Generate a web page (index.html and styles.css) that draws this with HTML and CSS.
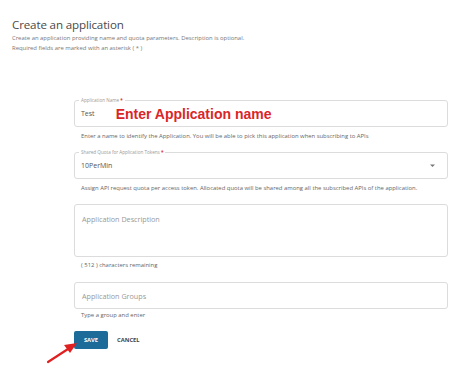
FILE: index.html
```html
<!DOCTYPE html>
<html>
<head>
<meta charset="utf-8">
<link rel="stylesheet" href="styles.css">
</head>
<body>
<div class="page">
  <header class="head">
    <h1 class="title">Create an application</h1>
    <p class="sub">Create an application providing name and quota parameters. Description is optional.</p>
    <p class="sub">Required fields are marked with an asterisk ( * )</p>
  </header>
  <form class="form">
    <div class="field f1">
      <span class="legend">Application Name <b class="req">*</b></span>
      <span class="value">Test</span>
      <span class="note">Enter Application name</span>
    </div>
    <p class="help h1">Enter a name to identify the Application. You will be able to pick this application when subscribing to APIs</p>

    <div class="field f2">
      <span class="legend">Shared Quota for Application Tokens <b class="req">*</b></span>
      <span class="value">10PerMin</span>
      <svg class="caret" width="6" height="4" viewBox="0 0 6 4"><path d="M0 0.5h5l-2.5 2.6z" fill="#777"/></svg>
    </div>
    <p class="help h2">Assign API request quota per access token. Allocated quota will be shared among all the subscribed APIs of the application.</p>

    <div class="field area">
      <span class="ph">Application Description</span>
    </div>
    <p class="help h3">( 512 ) characters remaining</p>

    <div class="field f4">
      <span class="ph">Application Groups</span>
    </div>
    <p class="help h4">Type a group and enter</p>

    <div class="actions">
      <button type="button" class="btn save">SAVE</button>
      <button type="button" class="btn cancel">CANCEL</button>
    </div>
  </form>
  <svg class="arrow" width="40" height="30" viewBox="0 0 40 30">
    <line x1="4" y1="26" x2="24" y2="13" stroke="#e02020" stroke-width="2.2" stroke-linecap="round"/>
    <polygon points="33,7 20,9 26,17" fill="#e02020"/>
  </svg>
</div>
</body>
</html>
```

FILE: styles.css
```css
html, body {
  margin: 0;
  padding: 0;
  background: #fff;
}
body {
  font-family: "Open Sans", "Noto Sans", sans-serif;
  color: #555;
}
.page {
  position: relative;
  width: 474px;
  height: 375px;
  overflow: hidden;
}
.head {
  padding: 16px 0 0 12px;
}
.title {
  margin: 0;
  font-size: 11.6px;
  line-height: 17px;
  font-weight: 400;
  color: #4a4a4a;
  letter-spacing: -0.15px;
}
.sub {
  margin: 0;
  font-size: 5.9px;
  line-height: 10px;
  color: #777;
}
.form {
  margin: 0 0 0 74px;
  width: 374px;
  padding-top: 47px;
}
.field {
  position: relative;
  box-sizing: border-box;
  border: 1px solid #dcdcdc;
  border-radius: 3px;
  height: 27px;
  display: flex;
  align-items: center;
  padding: 0 6px;
}
.legend {
  position: absolute;
  left: 4px;
  top: -4px;
  background: #fff;
  padding: 0 2px;
  font-size: 4.6px;
  line-height: 6px;
  color: #999;
}
.req {
  color: #d33;
  font-weight: 700;
}
.value {
  font-size: 7px;
  color: #555;
}
.note {
  margin-left: 21px;
  font-family: "Liberation Sans", Arial, sans-serif;
  font-weight: 700;
  font-size: 14px;
  color: #d9262a;
}
.caret {
  margin-left: auto;
  margin-right: 5px;
}
.help {
  margin: 0;
  padding-left: 7px;
  font-size: 5.9px;
  line-height: 8px;
  color: #666;
}
.h1 { margin-top: 5px; margin-bottom: 12px; }
.h2 { margin-top: 5px; margin-bottom: 12px; }
.h3 { margin-top: 4px; margin-bottom: 13px; }
.h4 { margin-top: 2px; margin-bottom: 12px; }
.area {
  height: 53px;
  align-items: flex-start;
  padding-top: 9px;
}
.ph {
  font-size: 7.2px;
  color: #999;
  padding-left: 1px;
}
.actions {
  display: flex;
  align-items: center;
  gap: 9px;
}
.btn {
  font-family: "Open Sans", "Noto Sans", sans-serif;
  font-weight: 700;
  font-size: 5.8px;
  border: none;
  background: none;
  padding: 0;
  cursor: pointer;
}
.save {
  width: 34px;
  height: 18px;
  border-radius: 2px;
  background: #1c6b98;
  color: #fff;
}
.cancel {
  color: #444;
}
.arrow {
  position: absolute;
  left: 44px;
  top: 336px;
}
```
